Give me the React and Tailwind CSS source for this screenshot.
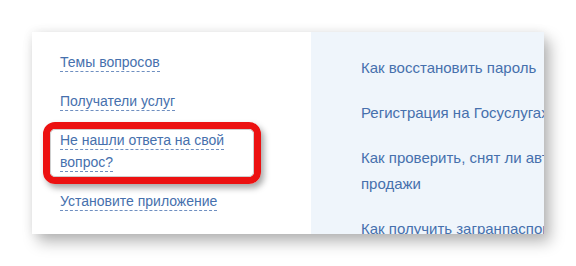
import React from "react";

const leftLinks = [
  "Темы вопросов",
  "Получатели услуг",
  "Не нашли ответа на свой вопрос?",
  "Установите приложение",
];

const rightLinks = [
  "Как восстановить пароль",
  "Регистрация на Госуслугах",
  "Как проверить, снят ли автомобиль с регистрации после продажи",
  "Как получить загранпаспорт",
];

export default function App() {
  return (
    <div className="relative w-[576px] h-[266px] bg-white overflow-hidden font-['Liberation_Sans',Arial,sans-serif]">
      <div className="pt-8 pl-8">
        {/* Panel */}
        <div className="flex w-[512px] h-[202px] overflow-hidden bg-white shadow-[6px_8px_14px_rgba(0,0,0,0.28),0_0_10px_rgba(0,0,0,0.08)]">
          <div className="w-[279px] shrink-0 pl-7 pt-[19px] flex flex-col gap-[17px]">
            {leftLinks.map((t, i) => (
              <div key={i} className={"text-[14px] leading-[22px] text-[#4670ad] " + (i === 2 ? "w-[180px]" : "")}>
                <span className="border-b border-dashed border-[#6f8fc0] pb-[1px]">{t}</span>
              </div>
            ))}
          </div>
          <div className="flex-1 min-w-0 bg-[#eff5fb] pl-[50px] pt-[23px] flex flex-col gap-[19px] overflow-hidden">
            {rightLinks.map((t, i) => (
              <div key={i} className={"text-[15px] leading-[26px] text-[#4670ad] " + (i === 2 ? "w-[410px] shrink-0" : "whitespace-nowrap")}>
                {t}
              </div>
            ))}
          </div>
        </div>
      </div>

      {/* Annotation frame */}
      <div className="absolute left-[43px] top-[122px] w-[218px] h-[62px] rounded-[12px] border-[7px] border-[#ec1111] shadow-[3px_4px_6px_rgba(0,0,0,0.35)]">
        <div className="w-full h-full rounded-[5px] border border-[#cfcfcf]" />
      </div>
    </div>
  );
}
